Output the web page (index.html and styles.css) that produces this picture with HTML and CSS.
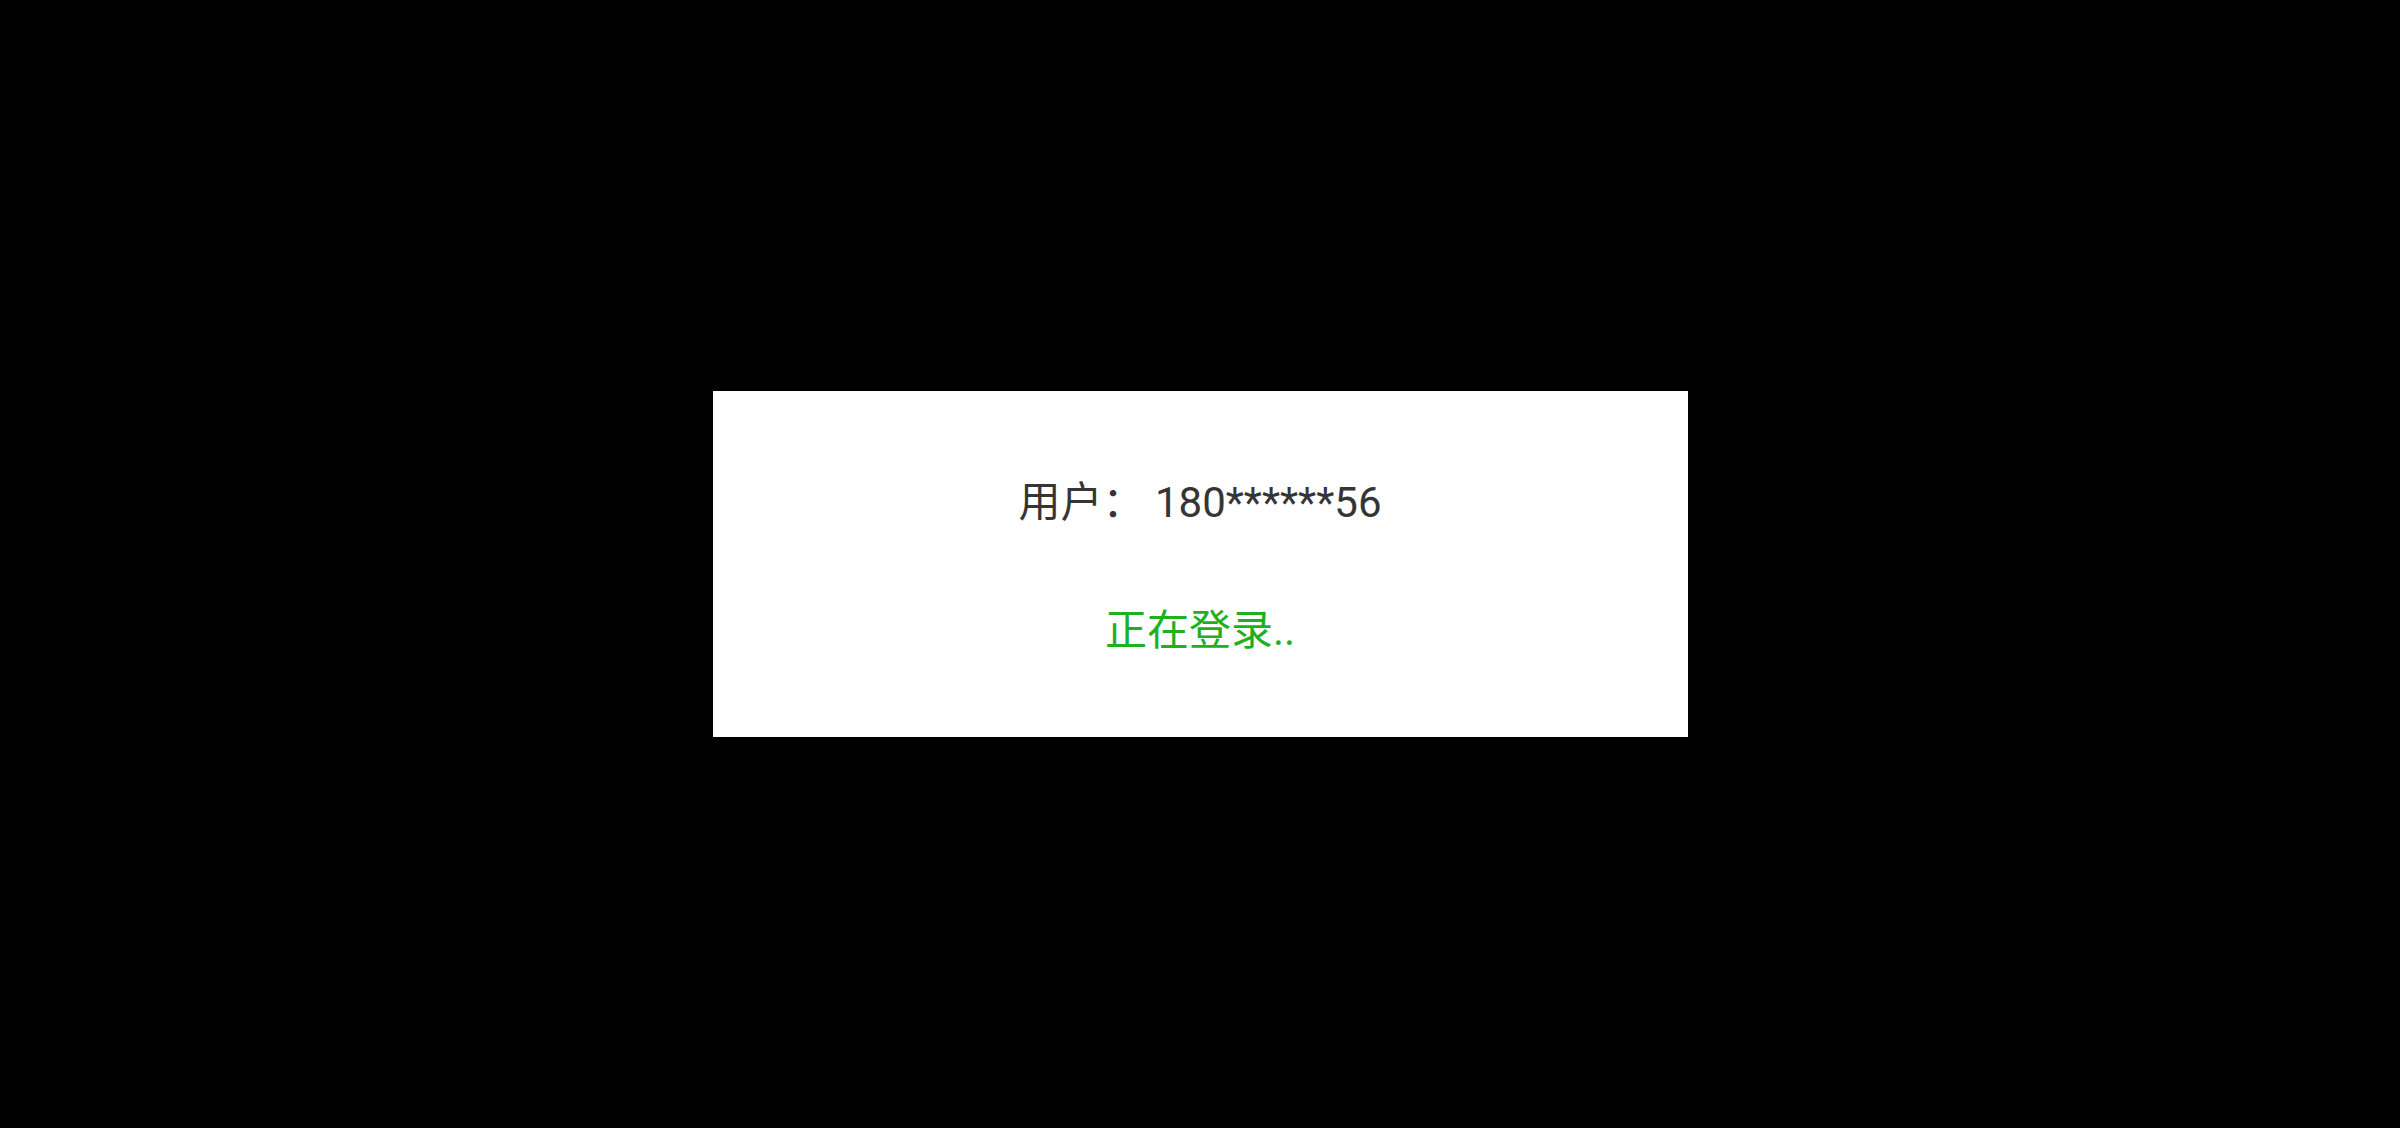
FILE: index.html
```html
<!DOCTYPE html>
<html lang="zh-CN">
<head>
<meta charset="utf-8">
<title>正在登录</title>
<link rel="stylesheet" href="styles.css">
</head>
<body>
<div class="screen">
  <div class="dialog">
    <div class="user">用户： 180******56</div>
    <div class="status">正在登录..</div>
  </div>
</div>
</body>
</html>
```

FILE: styles.css
```css
html, body {
  margin: 0;
  padding: 0;
  background: #000;
}
.screen {
  width: 2400px;
  height: 1128px;
  display: flex;
  align-items: center;
  justify-content: center;
}
.dialog {
  width: 975px;
  height: 346px;
  box-sizing: border-box;
  background: #fff;
  display: flex;
  flex-direction: column;
  align-items: center;
  padding-top: 84px;
  gap: 72px;
  font-family: Roboto, "Noto Sans CJK SC", sans-serif;
  font-size: 42px;
  line-height: 56px;
}
.user {
  color: #353535;
  white-space: pre;
}
.status {
  color: #1fb01f;
}
```
